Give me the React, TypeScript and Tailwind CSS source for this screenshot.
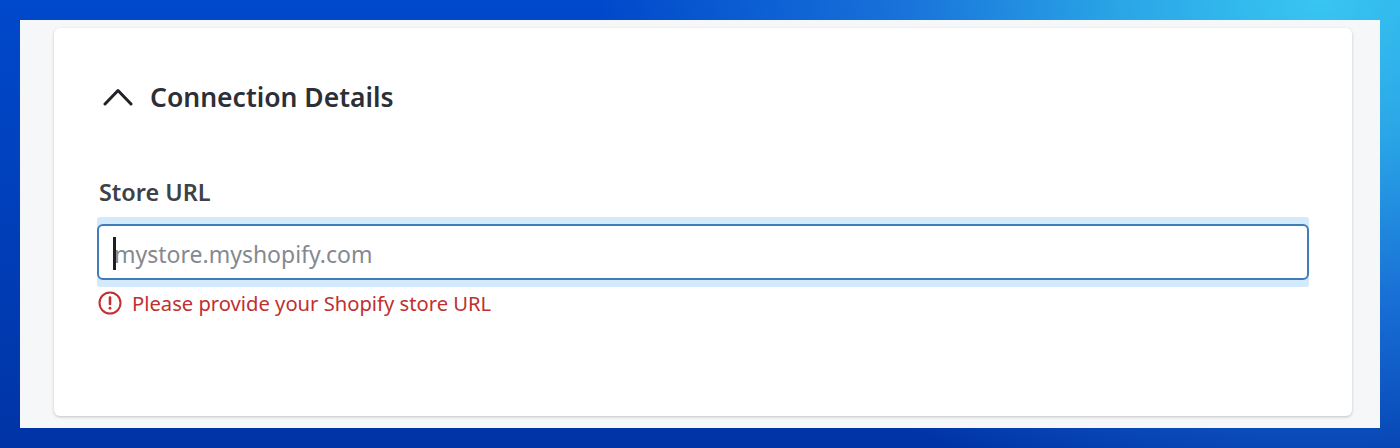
export default function App() {
	return (
		<div className="flex h-[448px] w-[1400px] bg-[radial-gradient(ellipse_720px_520px_at_1320px_0px,#38c6f2_0%,#2aa5e6_28%,rgba(30,125,222,0.8)_58%,rgba(0,71,200,0)_100%),linear-gradient(180deg,#0049cc_0%,#0034a6_100%)] p-5 font-['Noto_Sans',sans-serif]">
			<div className="flex-1 bg-[#f6f7f8] pb-3 pl-[34px] pr-7 pt-2">
				<div className="h-[388px] rounded-md bg-white pl-[43px] pr-[43px] pt-[50px] shadow-[0_1px_3px_rgba(0,0,0,0.22)]">
					<div className="flex h-10 items-center gap-[17px] pl-[6px]">
						<svg viewBox="0 0 30 18" className="-mt-[2px] h-[18px] w-[30px] shrink-0 text-[#1f2328]" fill="none" stroke="currentColor" strokeWidth="3" strokeLinecap="round" strokeLinejoin="round" aria-hidden="true">
							<path d="M2 16L15 2.5L28 16" />
						</svg>
						<h2 className="text-[26.5px] font-semibold text-[#2c2f36]">Connection Details</h2>
					</div>
					<label className="ml-[2px] mt-[58px] block text-[23.4px] font-semibold leading-[32px] text-[#3d4148]">Store URL</label>
					<div className="mt-[9px] rounded-[3px] bg-[#d3e9fc] py-[7px]">
						<div className="relative flex h-[56px] items-center rounded-md border-2 border-[#3f7cb8] bg-white pl-[15px]">
							<span className="absolute left-[14px] top-[11px] h-[33px] w-[3px] bg-[#1d1f24]" />
							<input className="mt-[5px] w-full bg-transparent text-[23px] text-[#2c2f36] outline-none placeholder:text-[#85898f]" placeholder="mystore.myshopify.com" readOnly />
						</div>
					</div>
					<div className="ml-[1px] mt-[2px] flex items-center gap-[10px] text-[20.2px] leading-[28px] text-[#c0302f]">
						<svg viewBox="0 0 24 24" className="h-6 w-6 shrink-0" fill="none" stroke="currentColor" strokeWidth="2" strokeLinecap="round" aria-hidden="true">
							<circle cx="12" cy="12" r="10.5" />
							<path d="M12 6.5v6.5" strokeWidth="2.6" />
							<path d="M12 17.2v.1" strokeWidth="2.8" />
						</svg>
						<span>Please provide your Shopify store URL</span>
					</div>
				</div>
			</div>
		</div>
	);
}
